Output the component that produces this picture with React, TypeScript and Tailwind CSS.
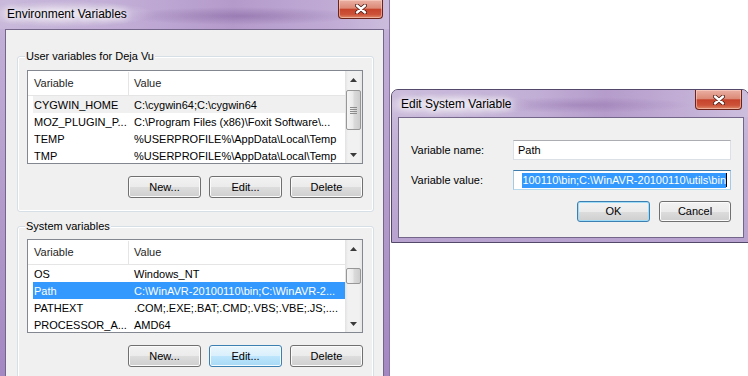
import React from "react";

const BTN_BASE =
  "rounded-[3px] border border-[#707070] bg-[linear-gradient(to_bottom,#f2f2f2_0%,#ebebeb_50%,#dddddd_50%,#cfcfcf_100%)] shadow-[inset_0_0_0_1px_#fbfbfb] flex items-center justify-center text-black";
const BTN_HOT =
  "rounded-[3px] border border-[#3c7fb1] bg-[linear-gradient(to_bottom,#eaf6fd_0%,#d9f0fc_50%,#bee6fd_50%,#a7d9f5_100%)] shadow-[inset_0_0_0_1px_#f4fbfe] flex items-center justify-center text-black";
const BTN_DEF =
  "rounded-[3px] border border-[#3c7fb1] bg-[linear-gradient(to_bottom,#f2f2f2_0%,#ebebeb_50%,#dddddd_50%,#cfcfcf_100%)] shadow-[inset_0_0_0_1px_#9fdcf7] flex items-center justify-center text-black";

type Row = { name: string; value: string; sel?: boolean; hot?: boolean };

function Arrow({ up }: { up: boolean }) {
  return (
    <div className="h-[17px] flex items-center justify-center shrink-0">
      <svg width="7" height="4" viewBox="0 0 7 4">
        {up ? (
          <path d="M0 4 L3.5 0 L7 4 Z" fill="#3a3a3a" />
        ) : (
          <path d="M0 0 L3.5 4 L7 0 Z" fill="#3a3a3a" />
        )}
      </svg>
    </div>
  );
}

function ScrollBar({ thumb, grip }: { thumb: string; grip: boolean }) {
  return (
    <div className="w-[17px] shrink-0 flex flex-col bg-[linear-gradient(to_right,#e2e2e2,#f1f1f1_18%,#f1f1f1_82%,#e6e6e6)]">
      <Arrow up />
      <div className="flex-1 flex flex-col">
        <div
          className={
            thumb +
            " mx-[1px] rounded-[2px] border border-[#979797] bg-[linear-gradient(to_right,#f5f5f5,#eaeaea_45%,#dadada_55%,#cdcdcd)] flex items-center justify-center"
          }
        >
          {grip && (
            <svg width="7" height="7" viewBox="0 0 7 7">
              <rect x="0" y="0" width="7" height="1" fill="#8c8c8c" />
              <rect x="0" y="2" width="7" height="1" fill="#8c8c8c" />
              <rect x="0" y="4" width="7" height="1" fill="#8c8c8c" />
              <rect x="0" y="6" width="7" height="1" fill="#8c8c8c" />
            </svg>
          )}
        </div>
      </div>
      <Arrow up={false} />
    </div>
  );
}

function ListView({ rows, thumb, grip }: { rows: Row[]; thumb: string; grip: boolean }) {
  return (
    <div className="w-[336px] h-[94px] border border-[#828790] bg-white flex overflow-hidden">
      <div className="flex-1 min-w-0 flex flex-col overflow-hidden">
        <div className="h-[25px] shrink-0 border-b border-[#e5e5e5] flex items-center pt-[1px] text-[#1e1e1e]">
          <div className="w-[101px] h-full pl-[6px] flex items-center border-r border-[#e5e5e5]">Variable</div>
          <div className="pl-[5px]">Value</div>
        </div>
        {rows.map((r) => (
          <div
            key={r.name}
            className={
              "ml-[5px] h-[17px] shrink-0 flex items-center pt-[1px] whitespace-nowrap " +
              (r.sel ? "bg-[#3399ff] text-white" : r.hot ? "bg-[#f0f0f0] text-black" : "text-black")
            }
          >
            <div className="w-[101px] pl-[1px] shrink-0">{r.name}</div>
            <div className="min-w-0">{r.value}</div>
          </div>
        ))}
      </div>
      <ScrollBar thumb={thumb} grip={grip} />
    </div>
  );
}

function GroupBox({ label, className, children }: { label: string; className: string; children: React.ReactNode }) {
  return (
    <div className={"relative w-[357px] rounded-[3px] border border-[#d5dfe5] shadow-[inset_0_0_0_1px_#ffffff] " + className}>
      <div className="absolute left-[7px] top-[-9px] px-[1px] leading-[16px] bg-[#f0f0f0] text-black">{label}</div>
      {children}
    </div>
  );
}

function CloseX() {
  return (
    <svg width="12" height="10" viewBox="0 0 12 10">
      <path d="M2 1.5 L10 8.5 M10 1.5 L2 8.5" stroke="#4a1710" strokeWidth="4" strokeLinecap="round" />
      <path d="M2 1.5 L10 8.5 M10 1.5 L2 8.5" stroke="#ffffff" strokeWidth="2.4" strokeLinecap="round" />
    </svg>
  );
}

const userRows: Row[] = [
  { name: "CYGWIN_HOME", value: "C:\\cygwin64;C:\\cygwin64", hot: true },
  { name: "MOZ_PLUGIN_P...", value: "C:\\Program Files (x86)\\Foxit Software\\..." },
  { name: "TEMP", value: "%USERPROFILE%\\AppData\\Local\\Temp" },
  { name: "TMP", value: "%USERPROFILE%\\AppData\\Local\\Temp" },
];

const sysRows: Row[] = [
  { name: "OS", value: "Windows_NT" },
  { name: "Path", value: "C:\\WinAVR-20100110\\bin;C:\\WinAVR-2...", sel: true },
  { name: "PATHEXT", value: ".COM;.EXE;.BAT;.CMD;.VBS;.VBE;.JS;...." },
  { name: "PROCESSOR_A...", value: "AMD64" },
];

export default function App() {
  return (
    <div className="relative w-[748px] h-[376px] overflow-hidden bg-white text-[11px] leading-[15px] font-['Liberation_Sans','Arial',sans-serif]">
      {/* Environment Variables window */}
      <div className="absolute left-0 top-0 w-[390px] h-[420px] flex flex-col border-r border-[#8c74a6] bg-[linear-gradient(to_bottom,#c9b9da_0px,#c1aed6_40px,#b39ccb_200px,#a387c2_380px)]">
        <div className="relative h-[29px] shrink-0 flex items-center pl-[7px] bg-[radial-gradient(ellipse_90px_13px_at_66px_14px,rgba(255,255,255,0.6),transparent),radial-gradient(ellipse_120px_9px_at_240px_16px,rgba(105,70,135,0.35),transparent),linear-gradient(to_right,#c9b8da,#c0abd5_35%,#b49acb_60%,#c0abd5_85%,#cbbcdc)]">
          <span className="text-[12px] text-black [text-shadow:0_0_6px_#fff,0_0_10px_#fff,0_0_14px_#fff]">Environment Variables</span>
          <div className="absolute left-[338px] top-0 w-[45px] h-[19px] rounded-b-[4px] border border-t-0 border-[#6b241a] bg-[linear-gradient(to_bottom,#eab0a3_0%,#dc8a77_45%,#c6432c_52%,#cc5238_80%,#e08a6a_100%)] shadow-[inset_0_0_0_1px_rgba(255,220,210,0.5)] flex items-center justify-center">
            <CloseX />
          </div>
        </div>
        <div className="ml-[5px] w-[379px] flex-1 bg-[#f0f0f0] border border-[#74658a] flex flex-col">
          <GroupBox label="User variables for Deja Vu" className="ml-[11px] mt-[26px]">
            <div className="pt-[13px] pl-[9px] pb-[13px] flex flex-col">
              <ListView rows={userRows} thumb="mt-[2px] h-[40px]" grip />
              <div className="mt-[12px] w-[336px] flex justify-end gap-[8px]">
                <div className={BTN_BASE + " w-[73px] h-[22px]"}>New...</div>
                <div className={BTN_BASE + " w-[73px] h-[22px]"}>Edit...</div>
                <div className={BTN_BASE + " w-[73px] h-[22px]"}>Delete</div>
              </div>
            </div>
          </GroupBox>
          <GroupBox label="System variables" className="ml-[11px] mt-[14px]">
            <div className="pt-[12px] pl-[9px] pb-[13px] flex flex-col">
              <ListView rows={sysRows} thumb="mt-[11px] h-[16px]" grip={false} />
              <div className="mt-[12px] w-[336px] flex justify-end gap-[8px]">
                <div className={BTN_BASE + " w-[73px] h-[22px]"}>New...</div>
                <div className={BTN_HOT + " w-[73px] h-[22px]"}>Edit...</div>
                <div className={BTN_BASE + " w-[73px] h-[22px]"}>Delete</div>
              </div>
            </div>
          </GroupBox>
        </div>
      </div>

      {/* Edit System Variable window */}
      <div className="absolute left-[391px] top-[89px] w-[358px] h-[154px] rounded-t-[7px] border border-[#54486a] flex flex-col bg-[linear-gradient(to_bottom,#cdbfdd_0px,#c2b0d6_60px,#b8a2cf_154px)]">
        <div className="relative h-[27px] shrink-0 flex items-center pl-[9px] pt-[2px] rounded-t-[6px] bg-[radial-gradient(ellipse_80px_12px_at_60px_15px,rgba(255,255,255,0.6),transparent),radial-gradient(ellipse_110px_8px_at_190px_15px,rgba(120,80,150,0.3),transparent),linear-gradient(to_right,#cbbbdb,#c2afd6_40%,#b59ccb_60%,#c4b1d7_85%,#cdbedd)]">
          <span className="text-[12px] text-black [text-shadow:0_0_6px_#fff,0_0_10px_#fff,0_0_14px_#fff]">Edit System Variable</span>
          <div className="absolute left-[303px] top-0 w-[47px] h-[20px] rounded-b-[4px] border border-t-0 border-[#6b241a] bg-[linear-gradient(to_bottom,#eab0a3_0%,#dc8a77_45%,#c6432c_52%,#cc5238_80%,#e08a6a_100%)] shadow-[inset_0_0_0_1px_rgba(255,220,210,0.5)] flex items-center justify-center">
            <CloseX />
          </div>
        </div>
        <div className="ml-[6px] w-[346px] h-[121px] shrink-0 bg-[#f0f0f0] border border-[#74658a] flex flex-col pt-[22px] px-[12px]">
          <div className="flex items-center h-[20px]">
            <div className="w-[102px] shrink-0 text-black">Variable name:</div>
            <div className="w-[218px] h-[20px] border border-[#dbdfe6] border-t-[#abadb3] bg-white flex items-center pl-[4px] text-black">
              Path
            </div>
          </div>
          <div className="flex items-center h-[20px] mt-[10px]">
            <div className="w-[102px] shrink-0 text-black">Variable value:</div>
            <div className="w-[218px] h-[20px] border border-[#a4c9e3] border-t-[#3d7bad] border-b-[#b7d9ed] bg-white flex items-center">
              <div className="ml-[4px] mr-[3px] flex-1 min-w-0 overflow-hidden flex justify-end items-center">
                <span className="shrink-0 whitespace-nowrap bg-[#3399ff] text-white leading-[15px]">
                  {"100110\\bin;C:\\WinAVR-20100110\\utils\\bin"}
                </span>
                <span className="shrink-0 w-[1px] h-[14px] bg-black" />
              </div>
            </div>
          </div>
          <div className="mt-[11px] flex justify-end gap-[9px]">
            <div className={BTN_DEF + " w-[73px] h-[21px]"}>OK</div>
            <div className={BTN_BASE + " w-[72px] h-[21px]"}>Cancel</div>
          </div>
        </div>
      </div>
    </div>
  );
}
